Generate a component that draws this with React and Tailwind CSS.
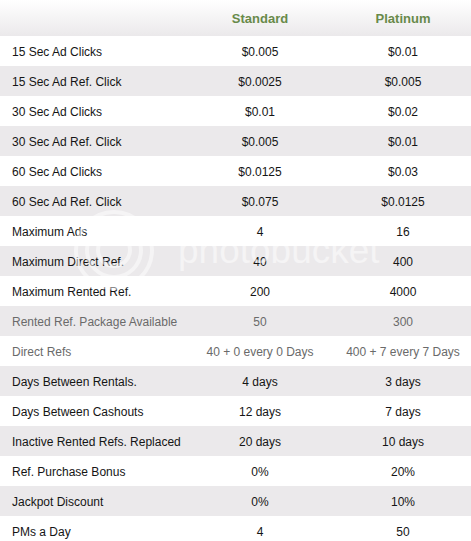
import React from "react";

const rows = [
    ["15 Sec Ad Clicks", "$0.005", "$0.01"],
    ["15 Sec Ad Ref. Click", "$0.0025", "$0.005"],
    ["30 Sec Ad Clicks", "$0.01", "$0.02"],
    ["30 Sec Ad Ref. Click", "$0.005", "$0.01"],
    ["60 Sec Ad Clicks", "$0.0125", "$0.03"],
    ["60 Sec Ad Ref. Click", "$0.075", "$0.0125"],
    ["Maximum Ads", "4", "16"],
    ["Maximum Direct Ref.", "40", "400"],
    ["Maximum Rented Ref.", "200", "4000"],
    ["Rented Ref. Package Available", "50", "300"],
    ["Direct Refs", "40 + 0 every 0 Days", "400 + 7 every 7 Days"],
    ["Days Between Rentals.", "4 days", "3 days"],
    ["Days Between Cashouts", "12 days", "7 days"],
    ["Inactive Rented Refs. Replaced", "20 days", "10 days"],
    ["Ref. Purchase Bonus", "0%", "20%"],
    ["Jackpot Discount", "0%", "10%"],
    ["PMs a Day", "4", "50"],
];

export default function App() {
    return (
        <div className="relative w-[471px] h-[541px] overflow-hidden bg-white font-['Liberation_Sans',Arial,sans-serif]">
            {/* Header */}
            <div className="grid grid-cols-[185px_150px_1fr] h-[36px] items-center bg-gradient-to-b from-white to-[#ebe9eb] text-[13px] font-bold text-[#688a4a]">
                <div />
                <div className="text-center pt-px">Standard</div>
                <div className="text-center pt-px">Platinum</div>
            </div>

            {/* Rows */}
            {rows.map(([label, std, plat], i) => (
                <div
                    key={label}
                    className={
                        "grid grid-cols-[185px_150px_1fr] h-[30px] items-center pt-[2px] text-[12px] " +
                        (i % 2 === 1 ? "bg-[#ebe9eb] " : "bg-white ") +
                        (i === 9 || i === 10 ? "text-[#6a6a6a]" : "text-[#151515]")
                    }
                >
                    <div className="pl-3 whitespace-nowrap">{label}</div>
                    <div className="text-center whitespace-nowrap">{std}</div>
                    <div className="text-center whitespace-nowrap">{plat}</div>
                </div>
            ))}

            {/* photobucket watermark */}
            <div className="pointer-events-none absolute left-[72px] top-[208px] flex items-center gap-[22px] opacity-50">
                <svg width="84" height="84" viewBox="0 0 84 84" fill="none" stroke="#ffffff" strokeWidth="4">
                    <circle cx="42" cy="42" r="38" />
                    <circle cx="42" cy="42" r="27" />
                    <circle cx="42" cy="42" r="16" />
                </svg>
                <span className="text-[37px] leading-none text-white">photobucket</span>
            </div>
        </div>
    );
}
